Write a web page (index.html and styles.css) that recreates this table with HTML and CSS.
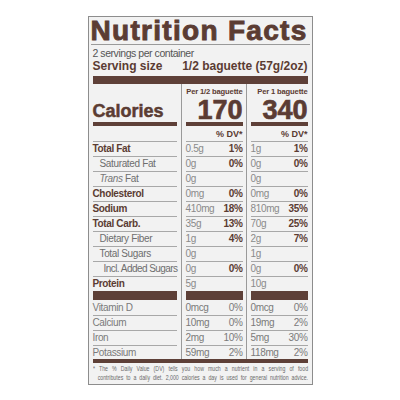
FILE: index.html
```html
<!DOCTYPE html>
<html lang="en">
<head>
  <meta charset="UTF-8">
  <meta name="viewport" content="width=device-width, initial-scale=1.0">
  <title>Nutrition Facts</title>
  <link rel="stylesheet" href="styles.css">
</head>
<body>
  <div class="label">
    <h1 class="title">Nutrition Facts</h1>
    <p class="servings">2 servings per container</p>
    <p class="size"><span>Serving size</span><span>1/2 baguette (57g/2oz)</span></p>
    <div class="bar-top"></div>

    <div class="facts">
      <div class="vline v1"></div>
      <div class="vline v2"></div>

      <div class="c a hd"><span class="cal-label">Calories</span></div>
      <div class="c b hd"><span class="per">Per 1/2 baguette</span><span class="big">170</span></div>
      <div class="c d hd"><span class="per">Per 1 baguette</span><span class="big">340</span></div>

      <div class="c a dv"></div>
      <div class="c b dv"><b>% DV*</b></div>
      <div class="c d dv"><b>% DV*</b></div>

      <div class="c a"><b>Total Fat</b></div>
      <div class="c b"><span class="v">0.5g</span><b>1%</b></div>
      <div class="c d"><span class="v">1g</span><b>1%</b></div>

      <div class="c a sub">Saturated Fat</div>
      <div class="c b"><span class="v">0g</span><b>0%</b></div>
      <div class="c d"><span class="v">0g</span><b>0%</b></div>

      <div class="c a sub"><span><i>Trans</i> Fat</span></div>
      <div class="c b"><span class="v">0g</span></div>
      <div class="c d"><span class="v">0g</span></div>

      <div class="c a"><b>Cholesterol</b></div>
      <div class="c b"><span class="v">0mg</span><b>0%</b></div>
      <div class="c d"><span class="v">0mg</span><b>0%</b></div>

      <div class="c a"><b>Sodium</b></div>
      <div class="c b"><span class="v">410mg</span><b>18%</b></div>
      <div class="c d"><span class="v">810mg</span><b>35%</b></div>

      <div class="c a"><b>Total Carb.</b></div>
      <div class="c b"><span class="v">35g</span><b>13%</b></div>
      <div class="c d"><span class="v">70g</span><b>25%</b></div>

      <div class="c a sub">Dietary Fiber</div>
      <div class="c b"><span class="v">1g</span><b>4%</b></div>
      <div class="c d"><span class="v">2g</span><b>7%</b></div>

      <div class="c a sub">Total Sugars</div>
      <div class="c b"><span class="v">0g</span></div>
      <div class="c d"><span class="v">1g</span></div>

      <div class="c a sub2">Incl. Added Sugars</div>
      <div class="c b"><span class="v">0g</span><b>0%</b></div>
      <div class="c d"><span class="v">0g</span><b>0%</b></div>

      <div class="c a pr"><b>Protein</b></div>
      <div class="c b pr"><span class="v">5g</span></div>
      <div class="c d pr"><span class="v">10g</span></div>

      <div class="c a vt vd">Vitamin D</div>
      <div class="c b vt vd"><span>0mcg</span><span>0%</span></div>
      <div class="c d vt vd"><span>0mcg</span><span>0%</span></div>

      <div class="c a vt">Calcium</div>
      <div class="c b vt"><span>10mg</span><span>0%</span></div>
      <div class="c d vt"><span>19mg</span><span>2%</span></div>

      <div class="c a vt">Iron</div>
      <div class="c b vt"><span>2mg</span><span>10%</span></div>
      <div class="c d vt"><span>5mg</span><span>30%</span></div>

      <div class="c a vt last">Potassium</div>
      <div class="c b vt last"><span>59mg</span><span>2%</span></div>
      <div class="c d vt last"><span>118mg</span><span>2%</span></div>
    </div>

    <div class="bar-bottom"></div>
    <p class="note"><span class="note-in">* The % Daily Value (DV) tells you how much a nutrient in a serving of food<br>contributes to a daily diet. 2,000 calories a day is used for general nutrition advice.</span></p>
  </div>
</body>
</html>
```

FILE: styles.css
```css
body {
  margin: 0;
  background: #fff;
  font-family: "Liberation Sans", Arial, sans-serif;
  color: #5b3c33;
}
.label {
  width: 225px;
  box-sizing: border-box;
  margin: 16px auto 0;
  padding: 0 4px;
  border: 1px solid #8d8d8d;
  background: #f2f2f2;
}
.title {
  margin: 0 -2px 0 -2px;
  padding-top: 1px;
  font: bold 28px/26px "Liberation Sans", Arial, sans-serif;
  letter-spacing: 1.3px;
  -webkit-text-stroke: 0.9px #5b3c33;
  white-space: nowrap;
  border-bottom: 1px solid #9a9a9a;
}
.servings {
  margin: 0;
  padding-top: 2px;
  font-size: 10.5px;
  line-height: 12px;
  letter-spacing: -0.45px;
  color: #555;
}
.size {
  margin: 0;
  display: flex;
  justify-content: space-between;
  font: bold 12px/14px "Liberation Sans", Arial, sans-serif;
}
.bar-top {
  height: 8px;
  margin-top: 3px;
  background: #5e4038;
}
.facts {
  display: grid;
  grid-template-columns: 84px 9px 57px 8px 57px;
}
.vline {
  grid-row: 1 / span 16;
  justify-self: center;
  width: 1px;
  background: #9a9a9a;
}
.v1 { grid-column: 2; }
.v2 { grid-column: 4; }
.c {
  height: 14px;
  line-height: 14px;
  font-size: 10px;
  letter-spacing: -0.35px;
  border-bottom: 1px solid #a8a8a8;
  display: flex;
  justify-content: space-between;
  align-items: center;
  white-space: nowrap;
}
.a { grid-column: 1; }
.b { grid-column: 3; }
.d { grid-column: 5; }
.c b { font-weight: bold; }
.c .v { color: #8a8a8a; }
.sub { padding-left: 7px; color: #6e6e6e; }
.sub2 { padding-left: 11px; color: #6e6e6e; letter-spacing: -0.55px; }
.sub i { color: #777; }
.hd {
  height: 38px;
  border-bottom: 4px solid #5e4038;
  flex-direction: column;
  justify-content: flex-end;
  align-items: flex-end;
  line-height: normal;
  letter-spacing: 0;
}
.a.hd { align-items: flex-start; }
.cal-label {
  font: bold 18px/20px "Liberation Sans", Arial, sans-serif;
  -webkit-text-stroke: 0.5px #5b3c33;
  margin-bottom: 1px;
}
.per {
  font-weight: bold;
  font-size: 7.6px;
  line-height: 10px;
  letter-spacing: -0.15px;
  margin-top: 3px;
}
.big {
  font: bold 27px/24px "Liberation Sans", Arial, sans-serif;
  -webkit-text-stroke: 0.7px #5b3c33;
  margin-top: auto;
}
.dv {
  height: 15px;
  justify-content: flex-end;
  font-size: 9px;
  letter-spacing: 0;
}
.pr {
  border-bottom: 9px solid #5e4038;
}
.vt {
  color: #7a7a7a;
}
.vd {
  height: 15px;
}
.last {
  height: 13px;
  border-bottom: none;
}
.bar-bottom {
  height: 4px;
  background: #5e4038;
}
.note {
  margin: 0;
  padding: 1px 0 2px;
  font-size: 7.8px;
  line-height: 9px;
  color: #6a6a6a;
  white-space: nowrap;
}
.note-in {
  display: block;
  box-sizing: border-box;
  width: 321px;
  padding-left: 7px;
  text-indent: -7px;
  text-align: justify;
  text-align-last: justify;
  white-space: normal;
  transform: scaleX(0.67);
  transform-origin: 0 0;
}
```
